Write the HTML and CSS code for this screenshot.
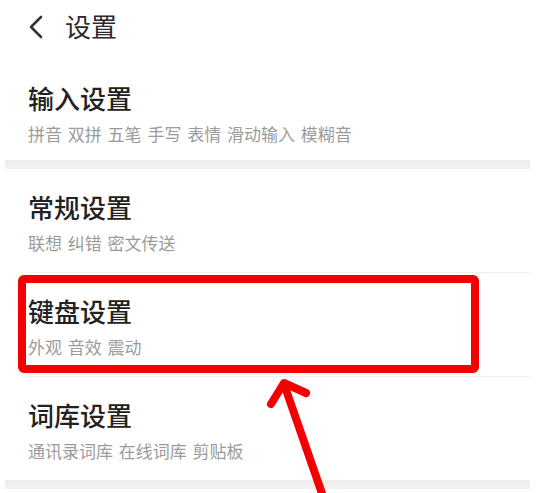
FILE: index.html
```html
<!DOCTYPE html>
<html lang="zh-CN">
<head>
  <meta charset="UTF-8" />
  <meta name="viewport" content="width=device-width, initial-scale=1" />
  <title>设置</title>
  <link rel="stylesheet" href="styles.css">
</head>
<body>
  <div class="screen">
    <header class="topbar">
      <svg class="back" width="16" height="24" viewBox="0 0 16 24">
        <polyline points="13,2 3,12 13,22" fill="none" stroke="#333" stroke-width="2.6" stroke-linecap="round" stroke-linejoin="round"/>
      </svg>
      <h1>设置</h1>
    </header>

    <section class="item first">
      <h2>输入设置</h2>
      <p>拼音 双拼 五笔 手写 表情 滑动输入 模糊音</p>
    </section>
    <div class="band"></div>

    <section class="item">
      <h2>常规设置</h2>
      <p>联想 纠错 密文传送</p>
    </section>
    <div class="divider"></div>

    <section class="item">
      <h2>键盘设置</h2>
      <p>外观 音效 震动</p>
    </section>
    <div class="divider"></div>

    <section class="item">
      <h2>词库设置</h2>
      <p>通讯录词库 在线词库 剪贴板</p>
    </section>
    <div class="band"></div>

    <!-- annotation overlay -->
    <div class="highlight"></div>
    <svg class="arrow" width="536" height="493" viewBox="0 0 536 493">
      <line x1="284" y1="384" x2="326" y2="505" stroke="#f50000" stroke-width="8" stroke-linecap="round"/>
      <polyline points="271,404 284,383 306,393" fill="none" stroke="#f50000" stroke-width="8" stroke-linecap="round" stroke-linejoin="round"/>
    </svg>
  </div>
</body>
</html>
```

FILE: styles.css
```css
body {
  margin: 0; background: #fff;
  font-family: "Noto Sans CJK SC", "Noto Sans", sans-serif;
}
.screen {
  position: relative; width: 536px; height: 493px; overflow: hidden; background: #fff;
}
.topbar {
  display: flex; align-items: flex-start;
  height: 60px; padding: 10px 0 0 28px; box-sizing: border-box;
}
.topbar .back {
  margin-top: 5px;
}
.topbar h1 {
  margin: 0 0 0 21px;
  font-size: 26px; line-height: 32px; font-weight: 400; color: #2a2a2a;
}
.item {
  padding: 22px 0 18px 28px;
}
.item.first {
  padding-bottom: 15px;
}
.item h2 {
  margin: 0; font-size: 26px; line-height: 32px; font-weight: 500; color: #222;
}
.item p {
  margin: 9px 0 0; font-size: 17px; line-height: 22px; color: #9b9b9b;
  word-spacing: 2px;
}
.band {
  height: 9px; margin: 0 6px 0 5px;
  background: linear-gradient(#ececec, #f2f2f2);
}
.divider {
  height: 1px; margin: 0 6px 0 28px; background: #efefef;
}
.highlight {
  position: absolute; left: 18px; top: 275px; width: 461px; height: 98px;
  box-sizing: border-box; border: 8px solid #f50000; border-radius: 6px;
}
.arrow {
  position: absolute; left: 0; top: 0;
}
```
